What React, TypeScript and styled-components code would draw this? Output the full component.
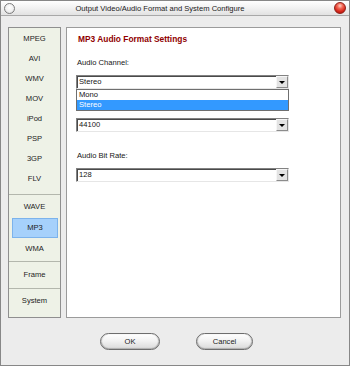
import React from "react";
import styled, { createGlobalStyle } from "styled-components";

const GlobalStyle = createGlobalStyle`
  html, body {
    margin: 0;
    padding: 0;
    background: #ffffff;
  }
`;

const formats = [
  { pt: 1, pb: 5, h: 20, items: ["MPEG", "AVI", "WMV", "MOV", "iPod", "PSP", "3GP", "FLV"] },
  { pt: 1, pb: 2, h: 21, items: ["WAVE", "MP3", "WMA"] },
  { pt: 2, pb: 3, h: 21, items: ["Frame"] },
  { pt: 1, pb: 0, h: 21, items: ["System"] },
];

const Window = styled.div`
  width: 350px;
  height: 366px;
  box-sizing: border-box;
  display: flex;
  flex-direction: column;
  background: #ececec;
  border: 1px solid #878787;
  font-family: "Liberation Sans", Arial, sans-serif;
  font-size: 7.6px;
  color: #151515;
`;

const TitleBar = styled.div`
  height: 14px;
  flex-shrink: 0;
  display: flex;
  align-items: center;
  padding: 0 3px 0 3px;
  background: linear-gradient(#ffffff, #f3f3f3 45%, #e2e2e2);
  border-bottom: 1px solid #a8a8a8;
`;

const Title = styled.div`
  flex: 1;
  text-align: center;
  padding-right: 29px;
  font-size: 7.6px;
  color: #222;
  white-space: nowrap;
`;

const Knob = styled.span<{ $red?: boolean }>`
  width: ${(p) => (p.$red ? 12 : 11)}px;
  height: ${(p) => (p.$red ? 12 : 11)}px;
  box-sizing: border-box;
  border-radius: 50%;
  flex-shrink: 0;
  border: 1px solid ${(p) => (p.$red ? "#8e2018" : "#7c7c7c")};
  background: ${(p) =>
    p.$red
      ? "radial-gradient(circle at 50% 28%, #ffd0c4 0, #f26a58 30%, #d8271b 65%, #9c1109 100%)"
      : "radial-gradient(circle at 50% 40%, #ffffff 0, #f0f0f0 55%, #cfcfcf 100%)"};
`;

const Body = styled.div`
  display: flex;
  gap: 5px;
  padding: 11px 8px 0 7px;
`;

const Sidebar = styled.nav`
  width: 53px;
  height: 291px;
  box-sizing: border-box;
  flex-shrink: 0;
  display: flex;
  flex-direction: column;
  border: 1px solid #8f8f8f;
  background: #eef2e7;
`;

const Group = styled.div<{ $pt: number; $pb: number; $last: boolean }>`
  padding: ${(p) => p.$pt}px 0 ${(p) => p.$pb}px;
  border-bottom: ${(p) => (p.$last ? "none" : "1px solid #b3b7ad")};
`;

const Item = styled.div<{ $h: number; $active?: boolean }>`
  box-sizing: border-box;
  height: ${(p) => (p.$active ? p.$h - 1 : p.$h)}px;
  line-height: ${(p) => (p.$active ? p.$h - 3 : p.$h)}px;
  margin: ${(p) => (p.$active ? "1px 2px 0 3px" : "0")};
  text-align: center;
  color: #1c1c1c;
  border: ${(p) => (p.$active ? "1px solid #7cb3ec" : "none")};
  background: ${(p) => (p.$active ? "#a6d1fb" : "transparent")};
`;

const Panel = styled.section`
  flex: 1;
  height: 291px;
  box-sizing: border-box;
  display: flex;
  flex-direction: column;
  padding: 5px 0 0 9px;
  background: #ffffff;
  border: 1px solid #9b9b9b;
`;

const Heading = styled.h2`
  margin: 0;
  padding-left: 2px;
  font-size: 8.4px;
  line-height: 12px;
  font-weight: bold;
  color: #900000;
`;

const Field = styled.div<{ $top: number }>`
  position: relative;
  margin-top: ${(p) => p.$top}px;
  width: 213px;
`;

const Label = styled.div`
  line-height: 12px;
  margin-bottom: 6px;
  padding-left: 1px;
`;

const Select = styled.div`
  position: relative;
  height: 14px;
  box-sizing: border-box;
  display: flex;
  align-items: stretch;
  border: 1px solid;
  border-color: #828282 #e6e6e6 #e6e6e6 #828282;
  box-shadow: inset 1px 1px 0 #4a4a4a;
  background: #ffffff;
`;

const Value = styled.div`
  flex: 1;
  padding-left: 2px;
  line-height: 12px;
`;

const Arrow = styled.div`
  width: 12px;
  display: flex;
  align-items: center;
  justify-content: center;
  box-sizing: border-box;
  border: 1px solid;
  border-color: #f6f6f6 #8c8c8c #8c8c8c #f6f6f6;
  background: #e3e3e3;

  &::after {
    content: "";
    border-left: 3px solid transparent;
    border-right: 3px solid transparent;
    border-top: 3px solid #000;
  }
`;

const Options = styled.ul`
  position: absolute;
  left: 0;
  right: 0;
  top: 32px;
  z-index: 2;
  margin: 0;
  padding: 0;
  list-style: none;
  background: #ffffff;
  border: 1px solid #6f6f6f;
`;

const Option = styled.li<{ $active?: boolean }>`
  height: 10px;
  line-height: 10px;
  padding-left: 2px;
  color: ${(p) => (p.$active ? "#ffffff" : "#111")};
  background: ${(p) => (p.$active ? "#3399ff" : "transparent")};
`;

const Footer = styled.div`
  flex: 1;
  display: flex;
  justify-content: center;
  align-items: flex-start;
  gap: 36px;
  padding: 15px 0 0 3px;
`;

const Button = styled.button<{ $w: number }>`
  width: ${(p) => p.$w}px;
  height: 17px;
  padding: 0;
  border: 1px solid #6d6d6d;
  border-radius: 9px;
  font-family: "Liberation Sans", Arial, sans-serif;
  font-size: 7.6px;
  color: #222;
  background: linear-gradient(#ffffff, #f2f2f2 45%, #dadada);
  box-shadow: inset 0 -1px 1px rgba(0, 0, 0, 0.18), inset 1px 0 1px rgba(0, 0, 0, 0.15),
    inset -1px 0 1px rgba(0, 0, 0, 0.15);
`;

const fields = [
  { top: 12, label: "Audio Channel:", value: "Stereo" },
  { top: 11, label: "Audio Sample Rate:", value: "44100" },
  { top: 18, label: "Audio Bit Rate:", value: "128" },
];

export default function App() {
  return (
    <>
      <GlobalStyle />
      <Window>
        <TitleBar>
          <Knob />
          <Title>Output Video/Audio Format and System Configure</Title>
          <Knob $red />
        </TitleBar>
        <Body>
          <Sidebar>
            {formats.map((g, gi) => (
              <Group key={gi} $pt={g.pt} $pb={g.pb} $last={gi === formats.length - 1}>
                {g.items.map((name) => (
                  <Item key={name} $h={g.h} $active={name === "MP3"}>
                    {name}
                  </Item>
                ))}
              </Group>
            ))}
          </Sidebar>
          <Panel>
            <Heading>MP3 Audio Format Settings</Heading>
            {fields.map((f, i) => (
              <Field key={f.label} $top={f.top}>
                <Label>{f.label}</Label>
                <Select>
                  <Value>{f.value}</Value>
                  <Arrow />
                </Select>
                {i === 0 && (
                  <Options>
                    <Option>Mono</Option>
                    <Option $active>Stereo</Option>
                  </Options>
                )}
              </Field>
            ))}
          </Panel>
        </Body>
        <Footer>
          <Button $w={60}>OK</Button>
          <Button $w={57}>Cancel</Button>
        </Footer>
      </Window>
    </>
  );
}
